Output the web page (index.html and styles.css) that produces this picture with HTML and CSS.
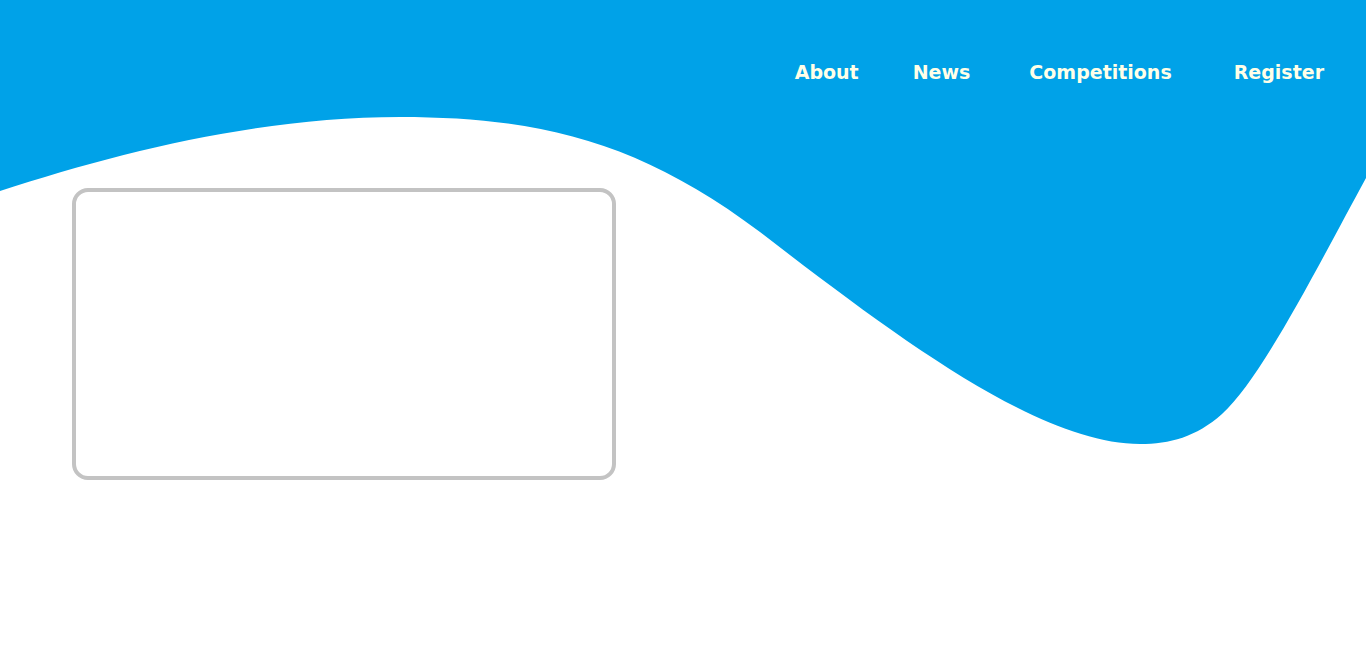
FILE: index.html
```html
<!DOCTYPE html>
<html>
<head>
<meta charset="utf-8">
<link rel="stylesheet" href="styles.css">
</head>
<body>
<svg class="wave" width="1366" height="652" viewBox="0 0 1366 652" xmlns="http://www.w3.org/2000/svg">
  <path d="M0,0 H1366 V178 C1320,262 1262,378 1222,414 C1196,437 1170,444 1140,444 C1040,444 900,340 760,232 C640,142 540,117 400,117 C260,117 120,152 0,191 Z" fill="#00a2e8"/>
</svg>
<div class="page">
  <header class="header">
    <nav class="nav">
      <a class="nav-link" href="#">About</a>
      <a class="nav-link" href="#">News</a>
      <a class="nav-link" href="#">Competitions</a>
      <a class="nav-link" href="#">Register</a>
    </nav>
  </header>
  <main class="main">
    <div class="card"></div>
  </main>
</div>
</body>
</html>
```
FILE: styles.css
```css
html, body {
  margin: 0;
  padding: 0;
  background: #ffffff;
  overflow: hidden;
}
body {
  width: 1366px;
  height: 652px;
  position: relative;
  font-family: "DejaVu Sans", Verdana, sans-serif;
}
.wave {
  position: absolute;
  left: 0;
  top: 0;
  z-index: 0;
}
.page {
  position: relative;
  z-index: 1;
}
.header {
  padding-top: 61px;
}
.nav {
  display: flex;
  justify-content: flex-end;
  padding-right: 42px;
}
.nav-link {
  color: #ffffe8;
  font-weight: bold;
  font-size: 19px;
  line-height: 22px;
  text-decoration: none;
}
.nav-link:nth-child(2) {
  margin-left: 54px;
}
.nav-link:nth-child(3) {
  margin-left: 59px;
}
.nav-link:nth-child(4) {
  margin-left: 62px;
}
.main {
  padding-left: 72px;
  padding-top: 105px;
}
.card {
  width: 536px;
  height: 284px;
  border: 4px solid #c3c3c3;
  border-radius: 16px;
  background: #ffffff;
}
```
